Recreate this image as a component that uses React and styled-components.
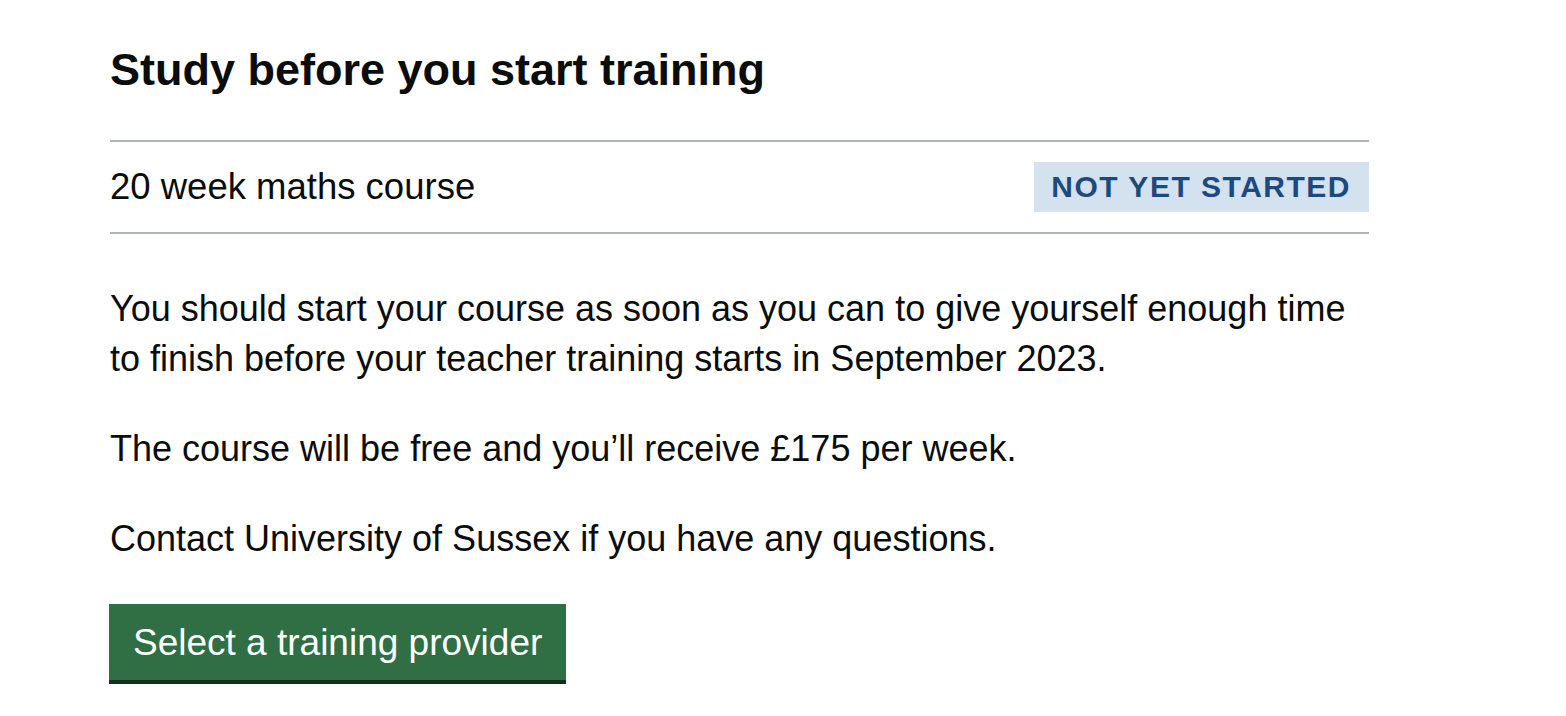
import styled, { createGlobalStyle } from "styled-components";

const GlobalStyle = createGlobalStyle`
  html, body {
    margin: 0;
    padding: 0;
    background: #ffffff;
  }
  body {
    font-family: "Liberation Sans", Arial, sans-serif;
    color: #0b0c0c;
    -webkit-font-smoothing: antialiased;
  }
`;

const Page = styled.main`
  width: 1259px;
  margin-left: 110px;
  padding: 40px 0 30px;
`;

const Heading = styled.h2`
  margin: 0 0 40px;
  font-size: 45px;
  line-height: 60px;
  font-weight: 700;
`;

const SummaryList = styled.dl`
  margin: 0 0 50px;
`;

const Row = styled.div`
  display: flex;
  align-items: center;
  justify-content: space-between;
  padding: 20px 0;
  border-top: 2px solid #b1b4b6;
  border-bottom: 2px solid #b1b4b6;
`;

const Key = styled.dt`
  margin: 0;
  font-size: 36.5px;
  line-height: 50px;
`;

const Value = styled.dd`
  margin: 0;
  display: flex;
`;

const Tag = styled.strong`
  display: inline-block;
  padding: 10px 18px 10px 17px;
  font-size: 30px;
  line-height: 30px;
  font-weight: 700;
  letter-spacing: 1.5px;
  text-transform: uppercase;
  color: #1d4a7c;
  background: ${(p) => (p.tone === "blue" ? "#d4e1ef" : "#eeefef")};
`;

const Body = styled.p`
  margin: 0 0 40px;
  font-size: 36px;
  line-height: 50px;
`;

const Button = styled.button`
  display: inline-block;
  margin: 0 0 4px -1px;
  padding: 16px 20px 14px;
  border: 4px solid transparent;
  border-radius: 0;
  font-family: inherit;
  font-size: 37px;
  line-height: 38px;
  font-weight: 400;
  color: #ffffff;
  background: #306f44;
  box-shadow: 0 4px 0 #12301d;
  cursor: pointer;
`;

export default function App() {
  return (
    <>
      <GlobalStyle />
      <Page>
        <Heading>Study before you start training</Heading>
        <SummaryList>
          <Row>
            <Key>20 week maths course</Key>
            <Value>
              <Tag tone="blue">Not yet started</Tag>
            </Value>
          </Row>
        </SummaryList>
        <Body>
          You should start your course as soon as you can to give yourself enough time
          to finish before your teacher training starts in September 2023.
        </Body>
        <Body>The course will be free and you’ll receive £175 per week.</Body>
        <Body>Contact University of Sussex if you have any questions.</Body>
        <Button>Select a training provider</Button>
      </Page>
    </>
  );
}
